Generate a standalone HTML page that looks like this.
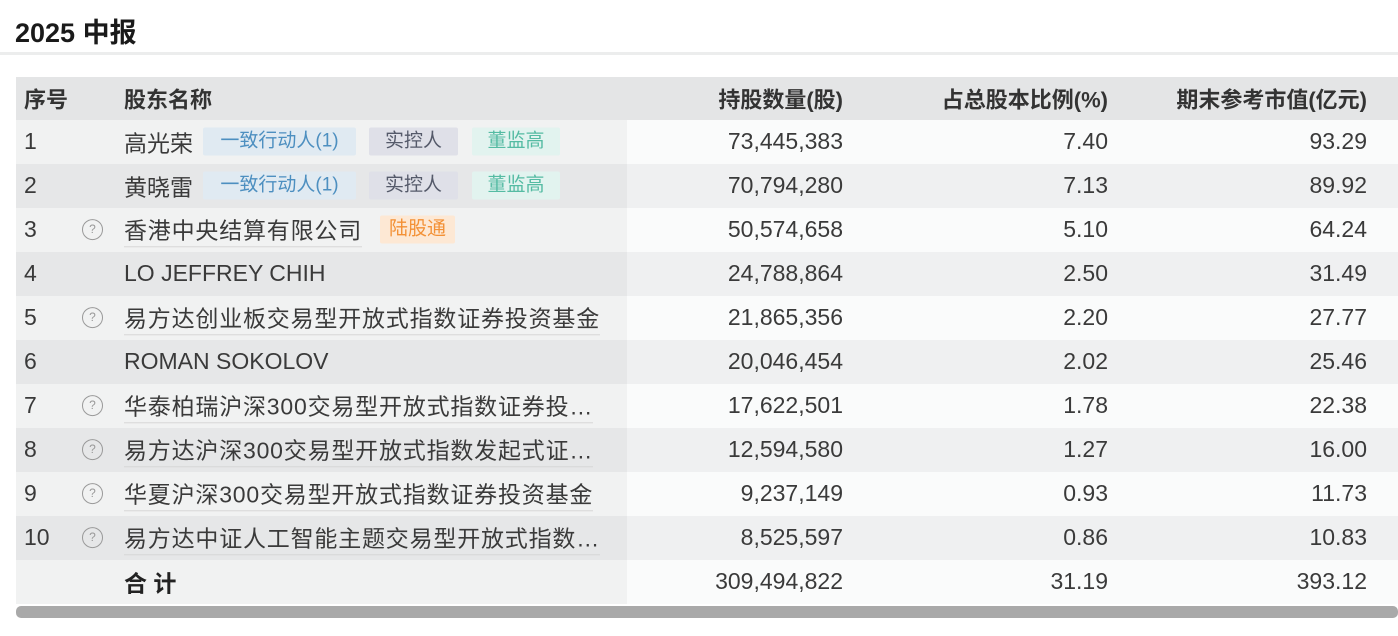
<!DOCTYPE html>
<html><head><meta charset="utf-8"><style>
*{margin:0;padding:0;box-sizing:border-box}
body{width:1398px;height:636px;background:#fff;font-family:"Liberation Sans","Noto Sans CJK SC",sans-serif;color:#3a3a3a;position:relative;overflow:hidden}
.title{position:absolute;left:15px;top:11px;font-size:27px;font-weight:bold;color:#1a1a1a}
.hline{position:absolute;left:0;right:0;top:52px;height:3px;background:#eceded}
.tbl{position:absolute;left:16px;top:77px;width:1382px}
.row{position:relative;height:44px;font-size:23px}
.row span{position:absolute;top:50%;transform:translateY(-52%);white-space:nowrap}
.hd{height:43px;background:#e4e5e6;color:#333;font-weight:bold;font-size:22px}
.odd{background:#fafbfb}
.even{background:#eff0f1}
.shade{position:absolute;left:0;top:0;bottom:0;width:611px;background:rgba(0,0,0,0.035)}
.n{left:8px}
.q{left:66px;width:21px;height:21px;border:1.5px solid #999;border-radius:50%;font-size:12px;color:#999;text-align:center;line-height:18px}
.nm{left:108px}
.nm.u{border-bottom:1px solid #d6d6d6;padding-bottom:1px;letter-spacing:0.8px}
.c1{right:555px}.c2{right:290px}.c3{right:31px}
.tag{font-size:19px;height:28px;line-height:28px;border-radius:2px;text-align:center}
.t1{background:#e0eaf2;color:#4d8fc0;width:153px}
.t2{background:#dfe0e8;color:#555a6a;width:89px}
.t3{background:#e2f3ef;color:#55bba3;width:88px}
.t4{background:#fde8d4;color:#f39136;width:75px}
.bold{font-weight:bold;color:#222}
.sb{position:absolute;left:16px;right:0;top:606px;height:12px;background:#a9a9a9;border-radius:5px}
</style></head><body>
<div class="title">2025 中报</div>
<div class="hline"></div>
<div class="tbl">
<div class="row hd"><span class="n">序号</span><span class="nm">股东名称</span><span class="c1">持股数量(股)</span><span class="c2">占总股本比例(%)</span><span class="c3">期末参考市值(亿元)</span></div>
<div class="row odd"><div class="shade"></div><span class="n">1</span><span class="nm">高光荣</span><span class="tag t1" style="left:187px">一致行动人(1)</span><span class="tag t2" style="left:353px">实控人</span><span class="tag t3" style="left:456px">董监高</span><span class="c1">73,445,383</span><span class="c2">7.40</span><span class="c3">93.29</span></div>
<div class="row even"><div class="shade"></div><span class="n">2</span><span class="nm">黄晓雷</span><span class="tag t1" style="left:187px">一致行动人(1)</span><span class="tag t2" style="left:353px">实控人</span><span class="tag t3" style="left:456px">董监高</span><span class="c1">70,794,280</span><span class="c2">7.13</span><span class="c3">89.92</span></div>
<div class="row odd"><div class="shade"></div><span class="n">3</span><span class="q">?</span><span class="nm u">香港中央结算有限公司</span><span class="tag t4" style="left:364px">陆股通</span><span class="c1">50,574,658</span><span class="c2">5.10</span><span class="c3">64.24</span></div>
<div class="row even"><div class="shade"></div><span class="n">4</span><span class="nm">LO JEFFREY CHIH</span><span class="c1">24,788,864</span><span class="c2">2.50</span><span class="c3">31.49</span></div>
<div class="row odd"><div class="shade"></div><span class="n">5</span><span class="q">?</span><span class="nm u">易方达创业板交易型开放式指数证券投资基金</span><span class="c1">21,865,356</span><span class="c2">2.20</span><span class="c3">27.77</span></div>
<div class="row even"><div class="shade"></div><span class="n">6</span><span class="nm">ROMAN SOKOLOV</span><span class="c1">20,046,454</span><span class="c2">2.02</span><span class="c3">25.46</span></div>
<div class="row odd"><div class="shade"></div><span class="n">7</span><span class="q">?</span><span class="nm u">华泰柏瑞沪深300交易型开放式指数证券投…</span><span class="c1">17,622,501</span><span class="c2">1.78</span><span class="c3">22.38</span></div>
<div class="row even"><div class="shade"></div><span class="n">8</span><span class="q">?</span><span class="nm u">易方达沪深300交易型开放式指数发起式证…</span><span class="c1">12,594,580</span><span class="c2">1.27</span><span class="c3">16.00</span></div>
<div class="row odd"><div class="shade"></div><span class="n">9</span><span class="q">?</span><span class="nm u">华夏沪深300交易型开放式指数证券投资基金</span><span class="c1">9,237,149</span><span class="c2">0.93</span><span class="c3">11.73</span></div>
<div class="row even"><div class="shade"></div><span class="n">10</span><span class="q">?</span><span class="nm u">易方达中证人工智能主题交易型开放式指数…</span><span class="c1">8,525,597</span><span class="c2">0.86</span><span class="c3">10.83</span></div>
<div class="row odd"><div class="shade"></div><span class="nm bold">合 计</span><span class="c1">309,494,822</span><span class="c2">31.19</span><span class="c3">393.12</span></div>
</div>
<div class="sb"></div>
</body></html>
